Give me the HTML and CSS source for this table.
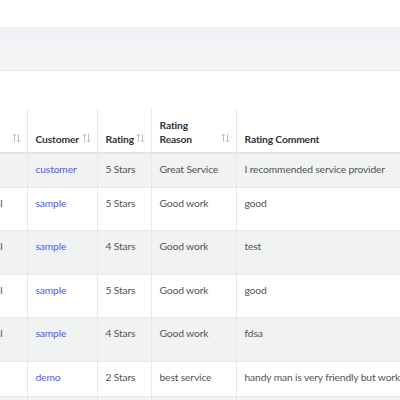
FILE: index.html
```html
<!DOCTYPE html>
<html>
<head>
<meta charset="utf-8">
<link rel="stylesheet" href="styles.css">
</head>
<body>
<div class="page">
  <div class="topbar"></div>
  <div class="tabs"></div>
  <div class="toolbar"></div>
  <div class="table-wrap">
    <table class="grid">
      <colgroup>
        <col class="c-first"><col class="c-cust"><col class="c-rate"><col class="c-reason"><col class="c-comment">
      </colgroup>
      <thead>
        <tr>
          <th><div class="th-in"><span>Email</span><svg class="sort" viewBox="0 0 9 10"><path d="M2.5 9V1M0.8 2.8L2.5 1L4.2 2.8M6.5 1v8M4.8 7.2L6.5 9L8.2 7.2"/></svg></div></th>
          <th><div class="th-in"><span>Customer</span><svg class="sort" viewBox="0 0 9 10"><path d="M2.5 9V1M0.8 2.8L2.5 1L4.2 2.8M6.5 1v8M4.8 7.2L6.5 9L8.2 7.2"/></svg></div></th>
          <th><div class="th-in"><span>Rating</span><svg class="sort" viewBox="0 0 9 10"><path d="M2.5 9V1M0.8 2.8L2.5 1L4.2 2.8M6.5 1v8M4.8 7.2L6.5 9L8.2 7.2"/></svg></div></th>
          <th><div class="th-in"><span>Rating<br>Reason</span><svg class="sort" viewBox="0 0 9 10"><path d="M2.5 9V1M0.8 2.8L2.5 1L4.2 2.8M6.5 1v8M4.8 7.2L6.5 9L8.2 7.2"/></svg></div></th>
          <th><div class="th-in"><span>Rating Comment</span></div></th>
        </tr>
      </thead>
      <tbody>
        <tr class="h34 odd">
          <td class="first"></td>
          <td><a href="#">customer</a></td>
          <td>5 Stars</td>
          <td>Great Service</td>
          <td class="nowrap">I recommended service provider</td>
        </tr>
        <tr class="h43">
          <td class="first">Manual</td>
          <td><a href="#">sample</a></td>
          <td>5 Stars</td>
          <td>Good work</td>
          <td>good</td>
        </tr>
        <tr class="h44 odd">
          <td class="first">Manual</td>
          <td><a href="#">sample</a></td>
          <td>4 Stars</td>
          <td>Good work</td>
          <td>test</td>
        </tr>
        <tr class="h43">
          <td class="first">Manual</td>
          <td><a href="#">sample</a></td>
          <td>5 Stars</td>
          <td>Good work</td>
          <td>good</td>
        </tr>
        <tr class="h44 odd">
          <td class="first">Manual</td>
          <td><a href="#">sample</a></td>
          <td>4 Stars</td>
          <td>Good work</td>
          <td>fdsa</td>
        </tr>
        <tr class="h35">
          <td class="first"></td>
          <td><a href="#">demo</a></td>
          <td>2 Stars</td>
          <td>best service</td>
          <td class="nowrap">handy man is very friendly but working well</td>
        </tr>
        <tr class="h34 odd">
          <td class="first"></td>
          <td><a href="#">demo</a></td>
          <td>3 Stars</td>
          <td>Good work</td>
          <td>nice</td>
        </tr>
      </tbody>
    </table>
  </div>
</div>
</body>
</html>
```
FILE: styles.css
```css
html, body {
  margin: 0;
  padding: 0;
  background: #ffffff;
  font-family: "Lato", "Open Sans", sans-serif;
  font-size: 10.3px;
  letter-spacing: -0.15px;
  color: #505559;
}
.page {
  width: 400px;
  height: 400px;
  overflow: hidden;
}
.topbar {
  height: 27px;
  background: #ffffff;
}
.tabs {
  height: 13px;
  background: #f0f1f6;
}
.toolbar {
  height: 30px;
  background: #f5f5f5;
  border-bottom: 1px solid #e6e6e6;
}
.table-wrap {
  height: 38px;
  background: #fdfdfd;
  border-bottom: 1px solid #e3e4e6;
  overflow: visible;
}
.grid {
  margin-top: 38px;
  margin-left: -93px;
  border-collapse: collapse;
  table-layout: fixed;
  width: 630px;
}
.c-first { width: 120px; }
.c-cust { width: 70px; }
.c-rate { width: 54px; }
.c-reason { width: 85px; }
.c-comment { width: 301px; }

.grid th {
  height: 37px;
  padding: 0 6px 6px 8px;
  vertical-align: bottom;
  text-align: left;
  font-weight: 700;
  color: #2f3337;
  line-height: 14px;
  border-right: 1px solid #e6e8ea;
  border-bottom: 2px solid #e1e3e5;
  background: #ffffff;
}
.th-in {
  display: flex;
  align-items: flex-end;
  justify-content: space-between;
}
.sort {
  width: 9px;
  height: 10px;
  margin-bottom: 3px;
  flex: none;
  fill: none;
  stroke: #b4b8bd;
  stroke-width: 0.9;
}
.grid td {
  padding: 8px 8px 0 8px;
  vertical-align: top;
  line-height: 15px;
  border-right: 1px solid #e6e8ea;
  border-bottom: 1px solid #e6e8ea;
  overflow: hidden;
}
.grid tr.h34 td { height: 25px; }
.grid tr.h35 td { height: 26px; }
.grid tr.h43 td { height: 34px; }
.grid tr.h44 td { height: 35px; }
.grid tr.odd td { background: #f1f2f2; }
.grid td.first {
  text-align: right;
  padding-right: 24px;
}
.grid td.nowrap { white-space: nowrap; }
.grid a {
  color: #4a5cf5;
  text-decoration: none;
}
```
